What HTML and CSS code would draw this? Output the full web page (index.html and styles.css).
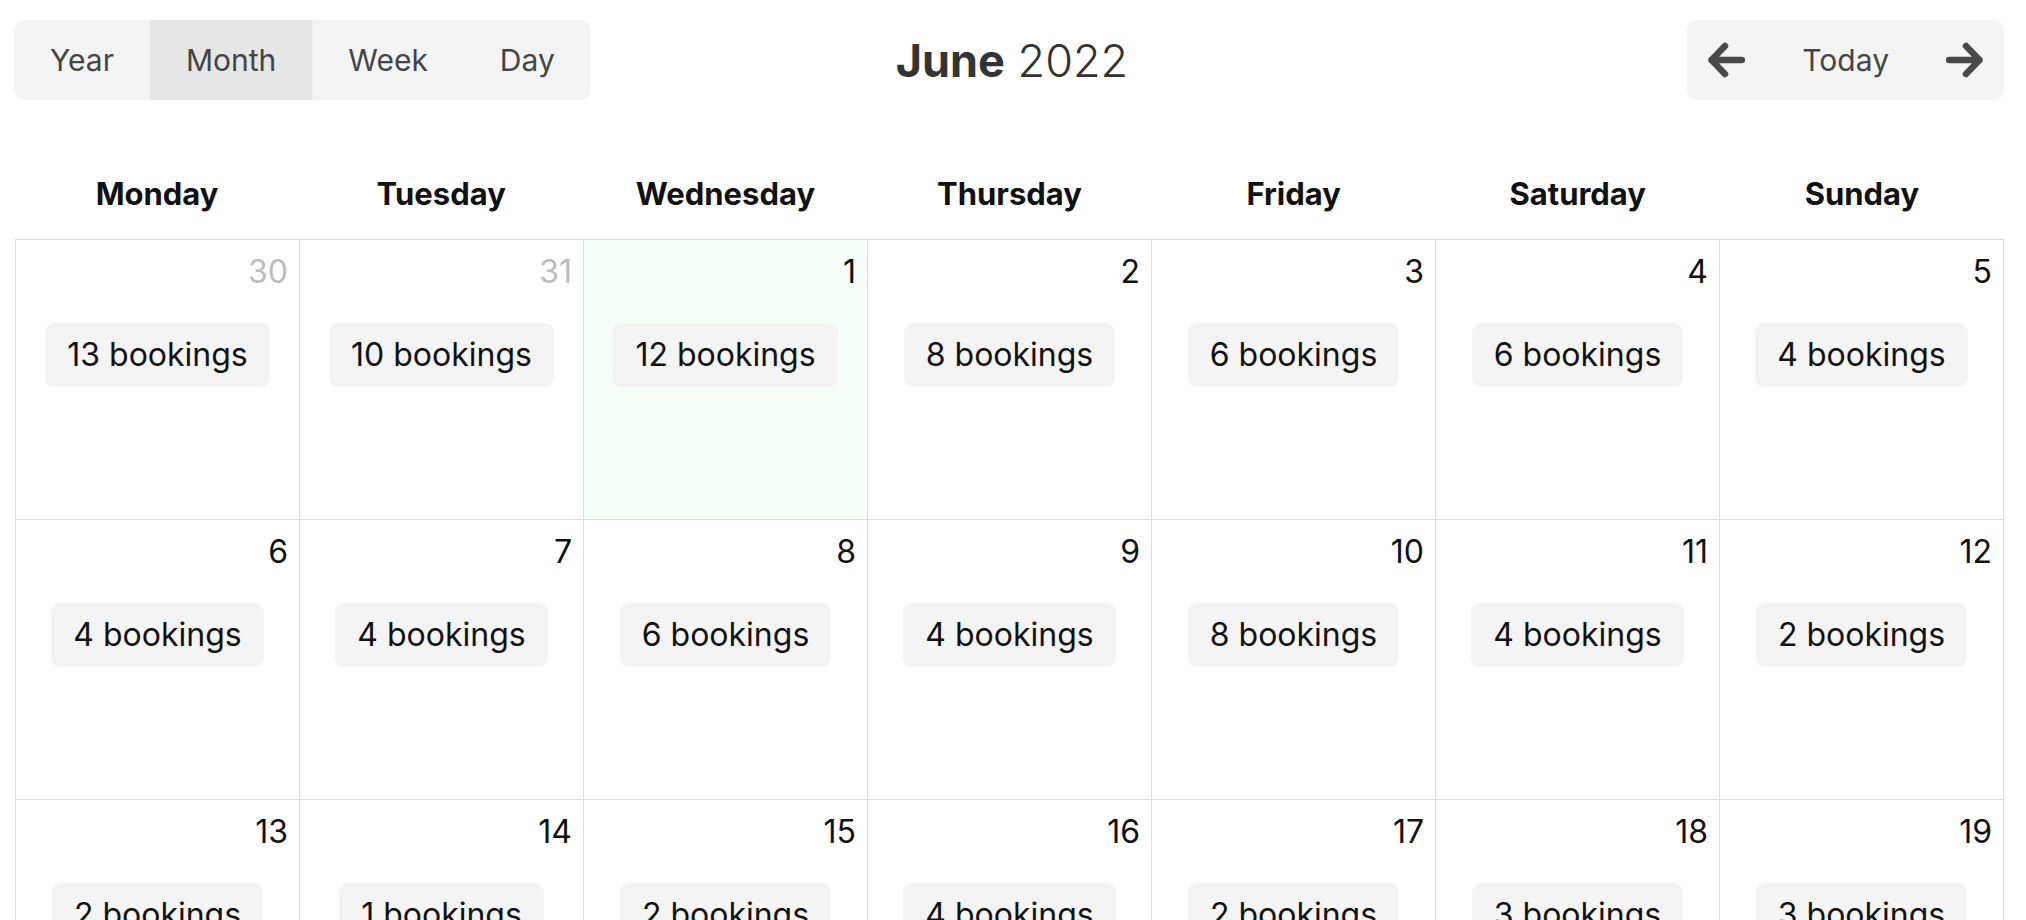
FILE: index.html
```html
<!DOCTYPE html>
<html lang="en">

<head>
    <meta charset="UTF-8">
    <meta name="viewport" content="width=device-width, initial-scale=1.0">
    <title>Bookings - June 2022</title>
    <link rel="stylesheet" href="styles.css">
</head>

<body>
    <div class="page">
        <div class="toolbar">
            <div class="segment">
                <button class="seg_btn">Year</button>
                <button class="seg_btn active">Month</button>
                <button class="seg_btn">Week</button>
                <button class="seg_btn">Day</button>
            </div>
            <div class="title"><b>June</b> 2022</div>
            <div class="segment right">
                <button class="nav_btn" title="Previous month">
                    <svg width="37" height="36" viewBox="0 0 37 36"><path d="M34 18H3.5M17 4L3.5 18 17 32" /></svg>
                </button>
                <button class="seg_btn today">Today</button>
                <button class="nav_btn" title="Next month">
                    <svg width="37" height="36" viewBox="0 0 37 36"><path d="M3 18H33.5M20 4L33.5 18 20 32" /></svg>
                </button>
            </div>
        </div>

        <div class="weekdays">
            <div>Monday</div>
            <div>Tuesday</div>
            <div>Wednesday</div>
            <div>Thursday</div>
            <div>Friday</div>
            <div>Saturday</div>
            <div>Sunday</div>
        </div>

        <div class="month">
            <!-- week 1 -->
            <div class="day other"><span class="num">30</span><span class="pill">13 bookings</span></div>
            <div class="day other"><span class="num">31</span><span class="pill">10 bookings</span></div>
            <div class="day today"><span class="num">1</span><span class="pill">12 bookings</span></div>
            <div class="day"><span class="num">2</span><span class="pill">8 bookings</span></div>
            <div class="day"><span class="num">3</span><span class="pill">6 bookings</span></div>
            <div class="day"><span class="num">4</span><span class="pill">6 bookings</span></div>
            <div class="day"><span class="num">5</span><span class="pill">4 bookings</span></div>
            <!-- week 2 -->
            <div class="day"><span class="num">6</span><span class="pill">4 bookings</span></div>
            <div class="day"><span class="num">7</span><span class="pill">4 bookings</span></div>
            <div class="day"><span class="num">8</span><span class="pill">6 bookings</span></div>
            <div class="day"><span class="num">9</span><span class="pill">4 bookings</span></div>
            <div class="day"><span class="num">10</span><span class="pill">8 bookings</span></div>
            <div class="day"><span class="num">11</span><span class="pill">4 bookings</span></div>
            <div class="day"><span class="num">12</span><span class="pill">2 bookings</span></div>
            <!-- week 3 -->
            <div class="day"><span class="num">13</span><span class="pill">2 bookings</span></div>
            <div class="day"><span class="num">14</span><span class="pill">1 bookings</span></div>
            <div class="day"><span class="num">15</span><span class="pill">2 bookings</span></div>
            <div class="day"><span class="num">16</span><span class="pill">4 bookings</span></div>
            <div class="day"><span class="num">17</span><span class="pill">2 bookings</span></div>
            <div class="day"><span class="num">18</span><span class="pill">3 bookings</span></div>
            <div class="day"><span class="num">19</span><span class="pill">3 bookings</span></div>
            <!-- week 4 -->
            <div class="day"><span class="num">20</span><span class="pill">5 bookings</span></div>
            <div class="day"><span class="num">21</span><span class="pill">3 bookings</span></div>
            <div class="day"><span class="num">22</span><span class="pill">2 bookings</span></div>
            <div class="day"><span class="num">23</span><span class="pill">4 bookings</span></div>
            <div class="day"><span class="num">24</span><span class="pill">6 bookings</span></div>
            <div class="day"><span class="num">25</span><span class="pill">2 bookings</span></div>
            <div class="day"><span class="num">26</span><span class="pill">1 bookings</span></div>
            <!-- week 5 -->
            <div class="day"><span class="num">27</span><span class="pill">3 bookings</span></div>
            <div class="day"><span class="num">28</span><span class="pill">2 bookings</span></div>
            <div class="day"><span class="num">29</span><span class="pill">4 bookings</span></div>
            <div class="day"><span class="num">30</span><span class="pill">2 bookings</span></div>
            <div class="day other"><span class="num">1</span></div>
            <div class="day other"><span class="num">2</span></div>
            <div class="day other"><span class="num">3</span></div>
        </div>
    </div>
</body>

</html>
```

FILE: styles.css
```css
body {
    margin: 0;
    padding: 0;
    font-family: Inter, "Noto Sans", "Liberation Sans", sans-serif;
    color: #111;
    background: #fff;
}

.page {
    padding: 20px 22px 0 14px;
}

/* top bar: view switch | title | navigation */
.toolbar {
    display: grid;
    grid-template-columns: 1fr auto 1fr;
    align-items: center;
    height: 80px;
}

.segment {
    display: flex;
    justify-self: start;
    height: 80px;
    background-color: #f4f4f4;
    border-radius: 10px;
}

.segment.right {
    justify-self: end;
}

.seg_btn,
.nav_btn {
    border: none;
    background: transparent;
    font-family: inherit;
    font-size: 30px;
    color: #454545;
    cursor: pointer;
    padding: 0 36px;
    height: 80px;
}

.seg_btn.active {
    background-color: #e6e6e6;
    box-shadow: 0 0 4px rgba(0, 0, 0, 0.04);
}

.nav_btn {
    padding: 0 21px;
    display: flex;
    align-items: center;
}

.nav_btn svg path {
    fill: none;
    stroke: #4a4a4a;
    stroke-width: 6.5;
    stroke-linecap: round;
    stroke-linejoin: round;
}

.title {
    font-size: 45px;
    font-weight: 300;
    color: #333;
    padding-left: 6px;
}

.title b {
    font-weight: 700;
}

/* weekday header */
.weekdays {
    display: grid;
    grid-template-columns: repeat(7, 1fr);
    padding: 74px 0 25px 1px;
    font-size: 31px;
    font-weight: 700;
    line-height: 40px;
    text-align: center;
}

/* month grid */
.month {
    display: grid;
    grid-template-columns: repeat(7, 1fr);
    border-top: 1px solid #d9d9d9;
    border-left: 1px solid #dddddd;
    margin-left: 1px;
}

.day {
    box-sizing: border-box;
    height: 280px;
    border-right: 1px solid #dddddd;
    border-bottom: 1px solid #dddddd;
    display: flex;
    flex-direction: column;
    align-items: center;
}

.day.today {
    background-color: #f5fff8;
}

.num {
    align-self: stretch;
    text-align: right;
    font-size: 32px;
    line-height: 40px;
    padding: 12px 11px 0 0;
}

.other .num {
    color: #bdbdbd;
}

.pill {
    margin-top: 31px;
    background-color: #f4f4f4;
    border-radius: 9px;
    padding: 12px 22px;
    font-size: 32px;
    line-height: 40px;
}
```
